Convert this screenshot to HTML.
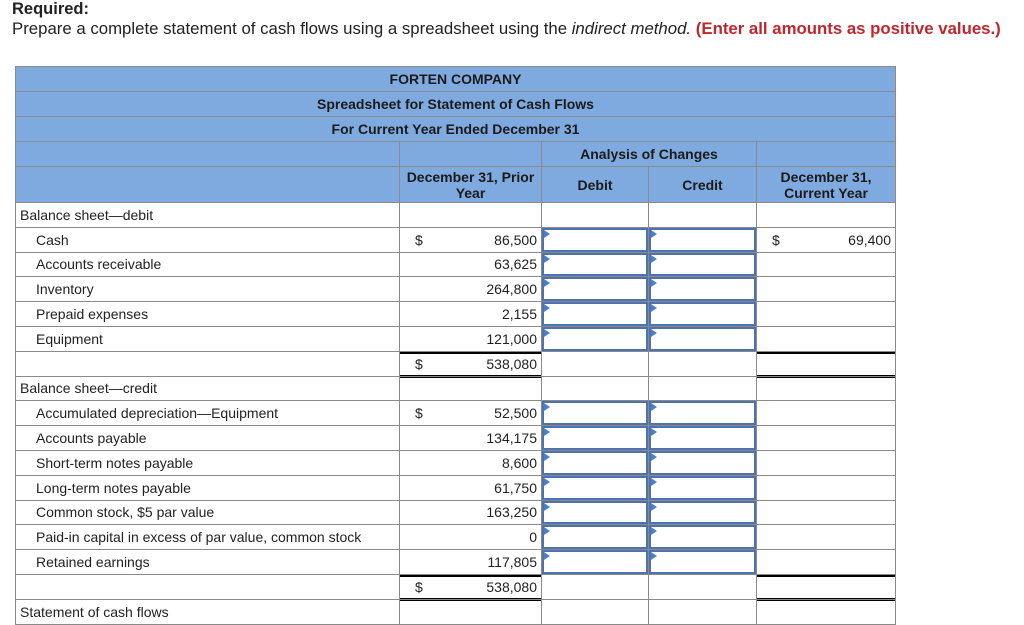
<!DOCTYPE html>
<html><head><meta charset="utf-8"><style>
body{margin:0;width:1024px;height:625px;overflow:hidden;background:#fff;font-family:"Liberation Sans",sans-serif;color:#222;}
.req{position:absolute;left:12px;top:0px;font-size:16.5px;font-weight:bold;}
.ins{position:absolute;left:12px;top:19px;font-size:16.8px;}
.ins i{font-style:italic}
.ins b{color:#c0262d}
table{position:absolute;left:15px;top:66px;border-collapse:collapse;table-layout:fixed;font-size:14px;}
td{border:1px solid #8a8a8a;padding:0;height:23.8px;position:relative;white-space:nowrap;}
.h td{background:#7faadf;font-weight:bold;text-align:center;color:#1a1a1a;font-size:14px;height:24px;}
.l{padding-left:4px}
.s{padding-left:20px}
.n{text-align:right;padding-right:4px}
.d{position:absolute;left:15px;top:4px}
.inp{box-sizing:border-box;box-shadow:inset 0 0 0 2px #4d72ad;}
.inp:before{content:"";position:absolute;left:2px;top:2px;border-left:6px solid #4a7fd0;border-top:4px solid transparent;border-bottom:4px solid transparent;}
.tt{box-shadow:inset 0 2px 0 #000}
.db:after{content:"";position:absolute;left:0;right:0;bottom:-2px;height:1px;border-top:1px solid #000;border-bottom:1px solid #000;}
</style></head><body>
<div class="req">Required:</div>
<div class="ins">Prepare a complete statement of cash flows using a spreadsheet using the <i>indirect method.</i> <b>(Enter all amounts as positive values.)</b></div>
<table>
<colgroup><col style="width:384px"><col style="width:142px"><col style="width:107px"><col style="width:108px"><col style="width:139px"></colgroup>
<tr class="h"><td colspan="5">FORTEN COMPANY</td></tr>
<tr class="h"><td colspan="5">Spreadsheet for Statement of Cash Flows</td></tr>
<tr class="h"><td colspan="5">For Current Year Ended December 31</td></tr>
<tr class="h"><td></td><td></td><td colspan="2">Analysis of Changes</td><td></td></tr>
<tr class="h"><td style="height:35px"></td><td style="height:35px">December 31, Prior<br>Year</td><td style="height:35px">Debit</td><td style="height:35px">Credit</td><td style="height:35px">December 31,<br>Current Year</td></tr>
<tr><td class="l">Balance sheet—debit</td><td></td><td></td><td></td><td></td></tr>
<tr><td class="s">Cash</td><td class="n"><span class="d">$</span>86,500</td><td class="inp"></td><td class="inp"></td><td class="n"><span class="d">$</span>69,400</td></tr>
<tr><td class="s">Accounts receivable</td><td class="n">63,625</td><td class="inp"></td><td class="inp"></td><td></td></tr>
<tr><td class="s">Inventory</td><td class="n">264,800</td><td class="inp"></td><td class="inp"></td><td></td></tr>
<tr><td class="s">Prepaid expenses</td><td class="n">2,155</td><td class="inp"></td><td class="inp"></td><td></td></tr>
<tr><td class="s">Equipment</td><td class="n">121,000</td><td class="inp"></td><td class="inp"></td><td></td></tr>
<tr><td></td><td class="n tt db"><span class="d">$</span>538,080</td><td></td><td></td><td class="tt db"></td></tr>
<tr><td class="l">Balance sheet—credit</td><td></td><td></td><td></td><td></td></tr>
<tr><td class="s">Accumulated depreciation—Equipment</td><td class="n"><span class="d">$</span>52,500</td><td class="inp"></td><td class="inp"></td><td></td></tr>
<tr><td class="s">Accounts payable</td><td class="n">134,175</td><td class="inp"></td><td class="inp"></td><td></td></tr>
<tr><td class="s">Short-term notes payable</td><td class="n">8,600</td><td class="inp"></td><td class="inp"></td><td></td></tr>
<tr><td class="s">Long-term notes payable</td><td class="n">61,750</td><td class="inp"></td><td class="inp"></td><td></td></tr>
<tr><td class="s">Common stock, $5 par value</td><td class="n">163,250</td><td class="inp"></td><td class="inp"></td><td></td></tr>
<tr><td class="s">Paid-in capital in excess of par value, common stock</td><td class="n">0</td><td class="inp"></td><td class="inp"></td><td></td></tr>
<tr><td class="s">Retained earnings</td><td class="n">117,805</td><td class="inp"></td><td class="inp"></td><td></td></tr>
<tr><td></td><td class="n tt db"><span class="d">$</span>538,080</td><td></td><td></td><td class="tt db"></td></tr>
<tr><td class="l">Statement of cash flows</td><td></td><td></td><td></td><td></td></tr>
</table>
</body></html>
